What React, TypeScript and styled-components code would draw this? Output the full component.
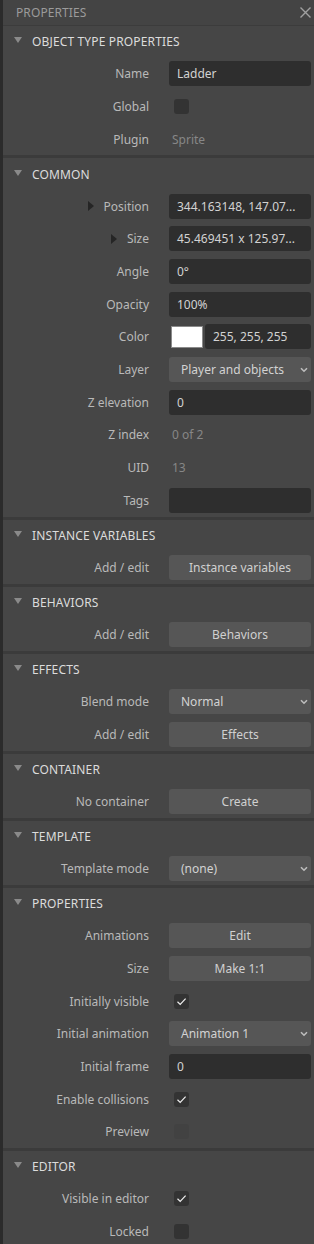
import React from "react";
import styled, { createGlobalStyle } from "styled-components";

const GlobalStyle = createGlobalStyle`
  html, body {
    margin: 0;
    padding: 0;
    background: #2b2b2b;
    overflow: hidden;
  }
  body {
    font-family: "Noto Sans", "Open Sans", sans-serif;
    font-size: 12px;
  }
`;

const Frame = styled.div`
  display: flex;
  width: 314px;
  height: 1244px;
  overflow: hidden;
  background: #2b2b2b;
`;

const Panel = styled.div`
  margin-left: 3px;
  flex: 1;
  display: flex;
  flex-direction: column;
  background: #464646;
  overflow: hidden;
  & > * {
    flex-shrink: 0;
  }
`;

const TitleBar = styled.div`
  height: 25px;
  border-bottom: 1px solid #3c3c3c;
  background: #444444;
  display: flex;
  align-items: center;
  justify-content: space-between;
  padding: 0 3px 0 13px;
  color: #9b9b9b;
  font-size: 12px;
  letter-spacing: 0.1px;
`;

const CloseButton = styled.svg`
  width: 11px;
  height: 11px;
  margin-top: -1px;
`;

const Section = styled.section<{ $first?: boolean }>`
  display: flex;
  flex-direction: column;
  border-top: ${(p) => (p.$first ? "none" : "3px solid #3b3b3b")};
  & > * {
    flex-shrink: 0;
  }
`;

const SectionHeader = styled.div`
  height: 31.5px;
  display: flex;
  align-items: center;
  padding-left: 10px;
  gap: 10px;
  color: #dcdcdc;
  font-size: 12px;
  letter-spacing: 0.15px;
`;

const DownTriangle = styled.span`
  width: 0;
  height: 0;
  border-left: 4px solid transparent;
  border-right: 4px solid transparent;
  border-top: 6px solid #8a8a8a;
  margin-top: -3px;
  margin-left: 1px;
`;

const Row = styled.div`
  height: 32.67px;
  display: grid;
  grid-template-columns: 146px 142px;
  column-gap: 20px;
  align-items: center;
`;

const Label = styled.div`
  display: flex;
  justify-content: flex-end;
  align-items: center;
  gap: 10px;
  color: #b9b9b9;
  font-size: 12px;
  white-space: nowrap;
`;

const RightTriangle = styled.span`
  width: 0;
  height: 0;
  border-top: 5px solid transparent;
  border-bottom: 5px solid transparent;
  border-left: 6px solid #252525;
`;

const Control = styled.div`
  display: flex;
  align-items: center;
  gap: 2px;
  min-width: 0;
`;

const TextInput = styled.div`
  flex: 1;
  min-width: 0;
  height: 25px;
  box-sizing: border-box;
  border-radius: 3px;
  background: #2e2e2e;
  color: #d2d2d2;
  padding: 0 8px;
  display: flex;
  align-items: center;
  white-space: nowrap;
  overflow: hidden;
  font-size: 12px;
`;

const Button = styled.div`
  flex: 1;
  height: 25px;
  border-radius: 3px;
  background: #565656;
  color: #d0d0d0;
  display: flex;
  align-items: center;
  justify-content: center;
  font-size: 12px;
`;

const Select = styled.div`
  flex: 1;
  height: 25px;
  box-sizing: border-box;
  border-radius: 3px;
  background: #565656;
  color: #d2d2d2;
  display: flex;
  align-items: center;
  justify-content: space-between;
  padding: 0 3px 0 12px;
  font-size: 12px;
  white-space: nowrap;
`;

const Chevron = styled.svg`
  width: 8px;
  height: 6px;
`;

const Checkbox = styled.div<{ $disabled?: boolean }>`
  width: 15px;
  height: 15px;
  margin-left: 5px;
  border-radius: 3px;
  background: ${(p) => (p.$disabled ? "#424242" : "#333333")};
  display: flex;
  align-items: center;
  justify-content: center;
`;

const Plain = styled.div`
  padding-left: 3px;
  color: #878787;
  font-size: 12px;
`;

const Swatch = styled.div<{ $color: string }>`
  width: 32px;
  height: 22px;
  box-sizing: border-box;
  margin-left: 2px;
  border: 1px solid #8a8a8a;
  background: ${(p) => p.$color};
`;

type Ctrl =
  | { kind: "input"; value: string }
  | { kind: "button"; value: string }
  | { kind: "select"; value: string }
  | { kind: "check"; checked: boolean; disabled?: boolean }
  | { kind: "plain"; value: string }
  | { kind: "color"; value: string; swatch: string };

type RowDef = { label: string; expander?: boolean; control: Ctrl };
type SectionDef = { title: string; rows: RowDef[] };

const sections: SectionDef[] = [
  {
    title: "OBJECT TYPE PROPERTIES",
    rows: [
      { label: "Name", control: { kind: "input", value: "Ladder" } },
      { label: "Global", control: { kind: "check", checked: false } },
      { label: "Plugin", control: { kind: "plain", value: "Sprite" } },
    ],
  },
  {
    title: "COMMON",
    rows: [
      { label: "Position", expander: true, control: { kind: "input", value: "344.163148, 147.07..." } },
      { label: "Size", expander: true, control: { kind: "input", value: "45.469451 x 125.97..." } },
      { label: "Angle", control: { kind: "input", value: "0°" } },
      { label: "Opacity", control: { kind: "input", value: "100%" } },
      { label: "Color", control: { kind: "color", value: "255, 255, 255", swatch: "#ffffff" } },
      { label: "Layer", control: { kind: "select", value: "Player and objects" } },
      { label: "Z elevation", control: { kind: "input", value: "0" } },
      { label: "Z index", control: { kind: "plain", value: "0 of 2" } },
      { label: "UID", control: { kind: "plain", value: "13" } },
      { label: "Tags", control: { kind: "input", value: "" } },
    ],
  },
  {
    title: "INSTANCE VARIABLES",
    rows: [{ label: "Add / edit", control: { kind: "button", value: "Instance variables" } }],
  },
  {
    title: "BEHAVIORS",
    rows: [{ label: "Add / edit", control: { kind: "button", value: "Behaviors" } }],
  },
  {
    title: "EFFECTS",
    rows: [
      { label: "Blend mode", control: { kind: "select", value: "Normal" } },
      { label: "Add / edit", control: { kind: "button", value: "Effects" } },
    ],
  },
  {
    title: "CONTAINER",
    rows: [{ label: "No container", control: { kind: "button", value: "Create" } }],
  },
  {
    title: "TEMPLATE",
    rows: [{ label: "Template mode", control: { kind: "select", value: "(none)" } }],
  },
  {
    title: "PROPERTIES",
    rows: [
      { label: "Animations", control: { kind: "button", value: "Edit" } },
      { label: "Size", control: { kind: "button", value: "Make 1:1" } },
      { label: "Initially visible", control: { kind: "check", checked: true } },
      { label: "Initial animation", control: { kind: "select", value: "Animation 1" } },
      { label: "Initial frame", control: { kind: "input", value: "0" } },
      { label: "Enable collisions", control: { kind: "check", checked: true } },
      { label: "Preview", control: { kind: "check", checked: false, disabled: true } },
    ],
  },
  {
    title: "EDITOR",
    rows: [
      { label: "Visible in editor", control: { kind: "check", checked: true } },
      { label: "Locked", control: { kind: "check", checked: false } },
    ],
  },
];

function renderControl(c: Ctrl) {
  switch (c.kind) {
    case "input":
      return <TextInput>{c.value}</TextInput>;
    case "button":
      return <Button>{c.value}</Button>;
    case "select":
      return (
        <Select>
          <span>{c.value}</span>
          <Chevron viewBox="0 0 8 6">
            <path d="M1 1.2 L4 4.2 L7 1.2" fill="none" stroke="#bdbdbd" strokeWidth="1.6" />
          </Chevron>
        </Select>
      );
    case "check":
      return (
        <Checkbox $disabled={c.disabled}>
          {c.checked && (
            <svg width="11" height="11" viewBox="0 0 11 11">
              <path d="M1.5 5.8 L4.2 8.4 L9.6 2.6" fill="none" stroke="#f0f0f0" strokeWidth="1.2" />
            </svg>
          )}
        </Checkbox>
      );
    case "plain":
      return <Plain>{c.value}</Plain>;
    case "color":
      return (
        <>
          <Swatch $color={c.swatch} />
          <TextInput>{c.value}</TextInput>
        </>
      );
  }
}

export default function App() {
  return (
    <>
      <GlobalStyle />
      <Frame>
        <Panel>
          <TitleBar>
            <span>PROPERTIES</span>
            <CloseButton viewBox="0 0 11 11">
              <path d="M0.5 0.5 L10.5 10.5 M10.5 0.5 L0.5 10.5" stroke="#a0a0a0" strokeWidth="1.4" />
            </CloseButton>
          </TitleBar>
          {sections.map((s, i) => (
            <Section key={s.title} $first={i === 0}>
              <SectionHeader>
                <DownTriangle />
                <span>{s.title}</span>
              </SectionHeader>
              {s.rows.map((r, j) => (
                <Row key={j}>
                  <Label>
                    {r.expander && <RightTriangle />}
                    <span>{r.label}</span>
                  </Label>
                  <Control>{renderControl(r.control)}</Control>
                </Row>
              ))}
            </Section>
          ))}
        </Panel>
      </Frame>
    </>
  );
}
